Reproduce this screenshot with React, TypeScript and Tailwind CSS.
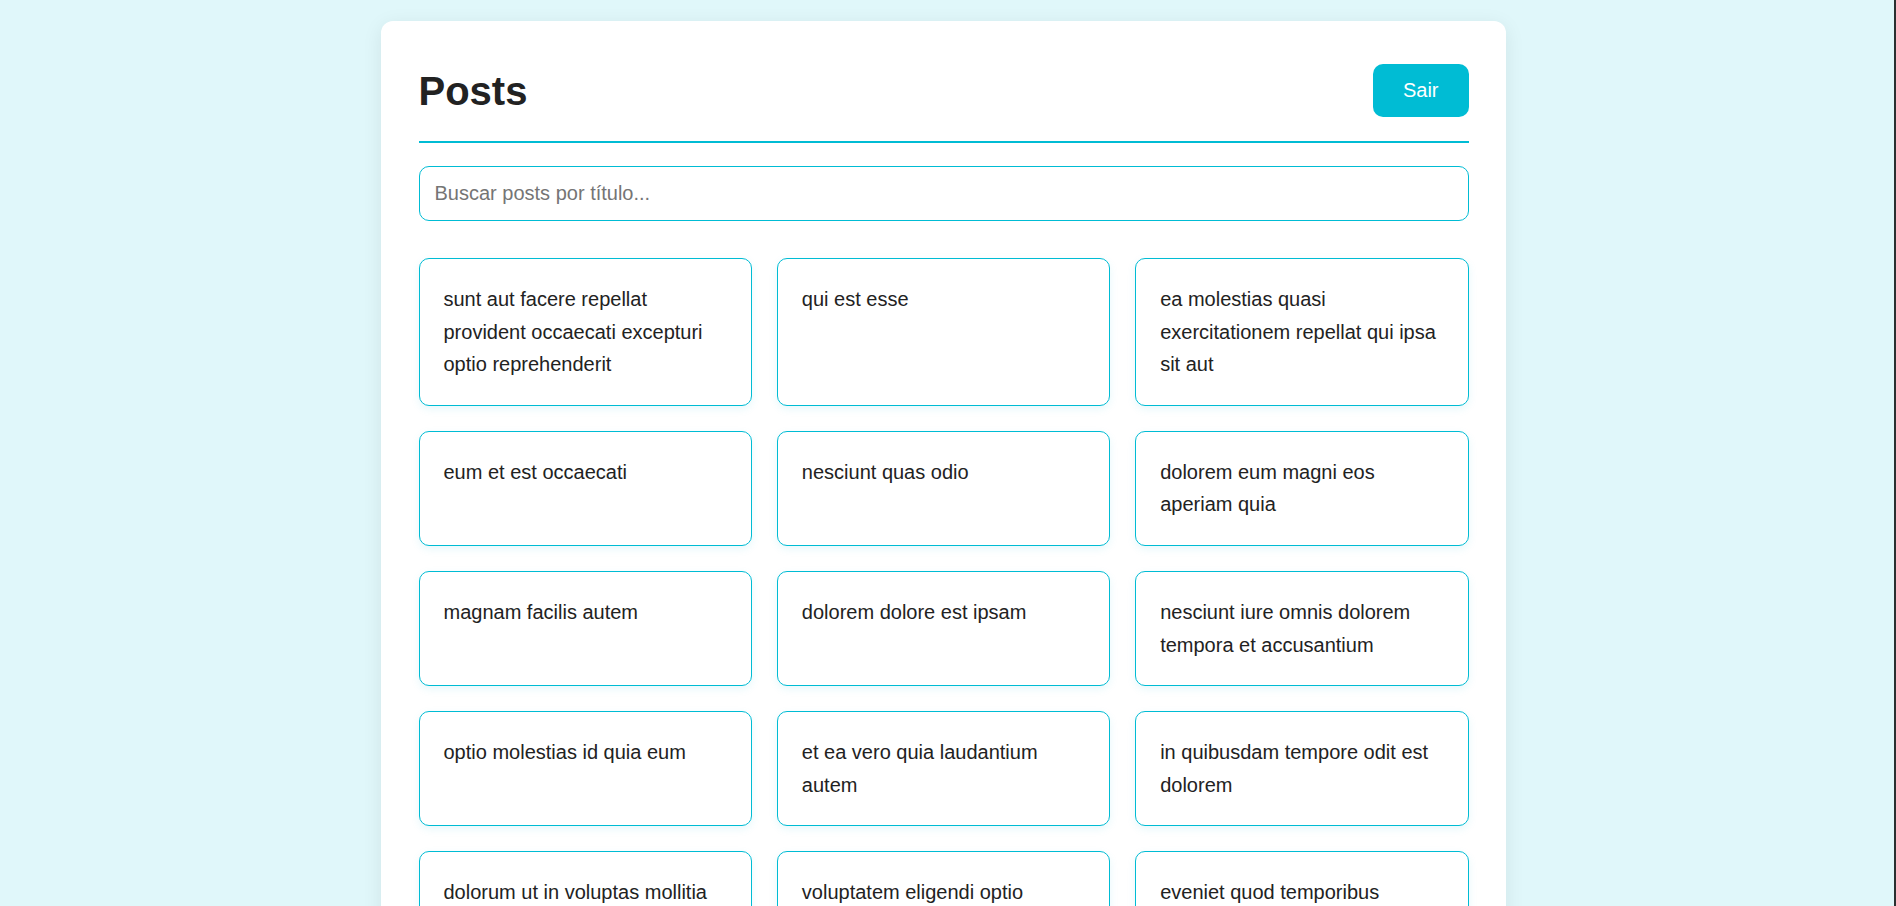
import { useState } from "react";

const posts = [
  "sunt aut facere repellat provident occaecati excepturi optio reprehenderit",
  "qui est esse",
  "ea molestias quasi exercitationem repellat qui ipsa sit aut",
  "eum et est occaecati",
  "nesciunt quas odio",
  "dolorem eum magni eos aperiam quia",
  "magnam facilis autem",
  "dolorem dolore est ipsam",
  "nesciunt iure omnis dolorem tempora et accusantium",
  "optio molestias id quia eum",
  "et ea vero quia laudantium autem",
  "in quibusdam tempore odit est dolorem",
  "dolorum ut in voluptas mollitia et saepe quo animi",
  "voluptatem eligendi optio",
  "eveniet quod temporibus",
  "sint suscipit perspiciatis velit dolorum rerum ipsa laboriosam odio",
  "fugit voluptas sed molestias voluptatem provident",
  "voluptate et itaque vero tempora molestiae",
  "adipisci placeat illum aut reiciendis qui",
  "doloribus ad provident suscipit at",
];

export default function App() {
  const [query, setQuery] = useState("");
  const filtered = posts.filter((p) => p.toLowerCase().includes(query.toLowerCase()));

  return (
    <div className="min-h-screen bg-[#e0f7fa] border-r-2 border-[#2b2f30] pr-[7px] pt-[21px] font-['Liberation_Sans',Arial,sans-serif]">
      <div className="mx-auto w-[1125px] rounded-[12px] bg-white px-[37.5px] pt-[38px] pb-[38px] shadow-[0_4px_20px_rgba(0,0,0,0.08)]">
        {/* header */}
        <div className="flex h-[64px] items-center justify-between">
          <h1 className="text-[40px] font-bold text-[#222]">Posts</h1>
          <button className="-mt-[2px] h-[53px] rounded-[10px] bg-[#00bcd4] px-[30px] text-[20px] text-white">
            Sair
          </button>
        </div>
        <div className="mt-[18px] h-[2px] bg-[#00bcd4]" />

        {/* search */}
        <input
          value={query}
          onChange={(e) => setQuery(e.target.value)}
          placeholder="Buscar posts por título..."
          className="mt-[23px] block h-[55px] w-full rounded-[10px] border border-[#00bcd4] px-[15px] text-[20px] text-[#222] outline-none placeholder:text-[#757575]"
        />

        {/* posts grid */}
        <div className="mt-[37px] grid grid-cols-3 gap-x-[25px] gap-y-[25px]">
          {filtered.map((title) => (
            <div
              key={title}
              className="rounded-[10px] border border-[#00bcd4] bg-white p-6 text-[20px] leading-[32.6px] text-[#222] shadow-[0_3px_8px_rgba(0,188,212,0.1)]"
            >
              {title}
            </div>
          ))}
        </div>
      </div>
    </div>
  );
}
